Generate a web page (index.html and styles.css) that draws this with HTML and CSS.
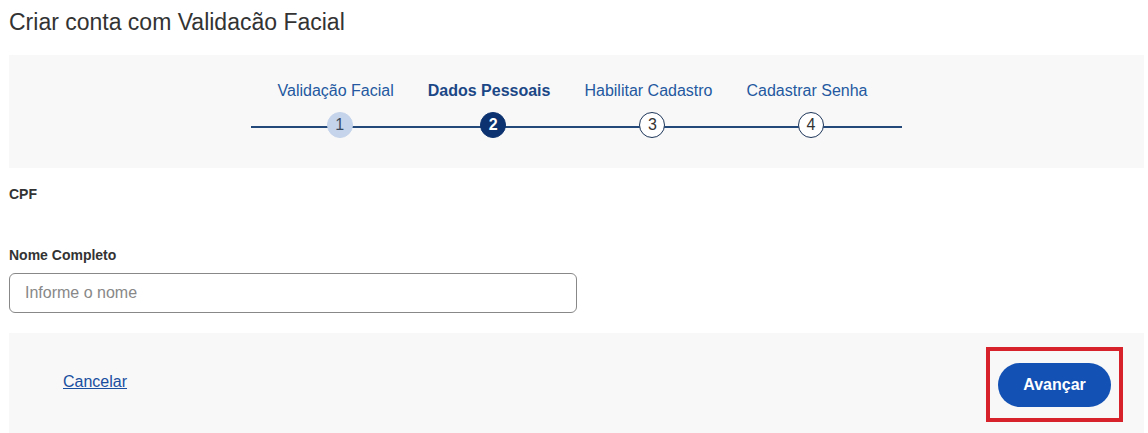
FILE: index.html
```html
<!DOCTYPE html>
<html lang="pt-BR">
<head>
<meta charset="utf-8">
<title>Criar conta com Validacão Facial</title>
<link rel="stylesheet" href="styles.css">
</head>
<body>
<main class="page">
  <h1 class="title">Criar conta com Validacão Facial</h1>

  <section class="stepper-panel">
    <ol class="steps">
      <li class="step step--done">
        <span class="step-label">Validação Facial</span>
        <span class="step-circle">1</span>
      </li>
      <li class="step step--active">
        <span class="step-label">Dados Pessoais</span>
        <span class="step-circle">2</span>
      </li>
      <li class="step">
        <span class="step-label">Habilitar Cadastro</span>
        <span class="step-circle">3</span>
      </li>
      <li class="step">
        <span class="step-label">Cadastrar Senha</span>
        <span class="step-circle">4</span>
      </li>
    </ol>
  </section>

  <form class="form">
    <div class="field field--cpf">
      <label class="field-label">CPF</label>
    </div>
    <div class="field">
      <label class="field-label" for="nome">Nome Completo</label>
      <input class="input" id="nome" type="text" placeholder="Informe o nome">
    </div>
  </form>

  <footer class="actions">
    <a class="link-cancel" href="#">Cancelar</a>
    <div class="highlight">
      <button class="btn-primary" type="button">Avançar</button>
    </div>
  </footer>
</main>
</body>
</html>
```

FILE: styles.css
```css
* {
  box-sizing: border-box;
}

html, body {
  margin: 0;
  padding: 0;
  background: #ffffff;
}

body {
  font-family: "Liberation Sans", Arial, sans-serif;
  color: #333333;
}

.page {
  padding: 9px 4px 0 9px;
}

.title {
  margin: 0 0 20px 0;
  font-size: 23px;
  line-height: 26px;
  font-weight: 400;
  color: #333333;
}

.stepper-panel {
  background: #f8f8f8;
  height: 113px;
  padding-top: 26px;
}

.steps {
  list-style: none;
  margin: 0 auto;
  padding: 0 8px 0 0;
  width: 651px;
  display: flex;
  justify-content: center;
  gap: 34px;
  background-image: linear-gradient(#23497a, #23497a);
  background-repeat: no-repeat;
  background-position: 0 45px;
  background-size: 100% 2px;
}

.step {
  display: flex;
  flex-direction: column;
  align-items: center;
}

.step-label {
  font-size: 16px;
  line-height: 20px;
  color: #2458a0;
  white-space: nowrap;
}

.step--active .step-label {
  font-weight: 700;
  color: #1b4786;
}

.step-circle {
  margin: 11px 0 0 8px;
  width: 26px;
  height: 26px;
  border-radius: 50%;
  display: flex;
  align-items: center;
  justify-content: center;
  font-size: 16px;
  line-height: 1;
  background: #ffffff;
  border: 1px solid #1d3559;
  color: #333333;
}

.step--done .step-circle {
  background: #c5d4eb;
  border-color: #c5d4eb;
  color: #3a4a5e;
}

.step--active .step-circle {
  background: #0c326f;
  border-color: #0c326f;
  color: #ffffff;
  font-weight: 700;
}

.form {
  padding-top: 16px;
}

.field {
  display: flex;
  flex-direction: column;
}

.field--cpf {
  height: 61px;
}

.field-label {
  font-size: 14px;
  line-height: 20px;
  font-weight: 700;
  color: #333333;
  margin-bottom: 8px;
}

.input {
  width: 568px;
  height: 40px;
  border: 1px solid #888888;
  border-radius: 6px;
  padding: 0 15px;
  font-family: "Liberation Sans", Arial, sans-serif;
  font-size: 16px;
  color: #333333;
  background: #ffffff;
}

.input::placeholder {
  color: #888888;
}

.actions {
  margin-top: 20px;
  background: #f8f8f8;
  display: flex;
  justify-content: space-between;
  align-items: center;
  padding: 14px 21px 14px 54px;
}

.link-cancel {
  font-size: 16px;
  line-height: 20px;
  color: #1a4fa0;
  text-decoration: underline;
  margin-bottom: 6px;
}

.highlight {
  border: 4px solid #d7212b;
  padding: 12px 8px 11px 8px;
}

.btn-primary {
  display: block;
  width: 113px;
  height: 44px;
  border: none;
  border-radius: 22px;
  background: #1351b4;
  color: #ffffff;
  font-family: "Liberation Sans", Arial, sans-serif;
  font-size: 16px;
  font-weight: 700;
  padding: 0;
  cursor: pointer;
}
```
